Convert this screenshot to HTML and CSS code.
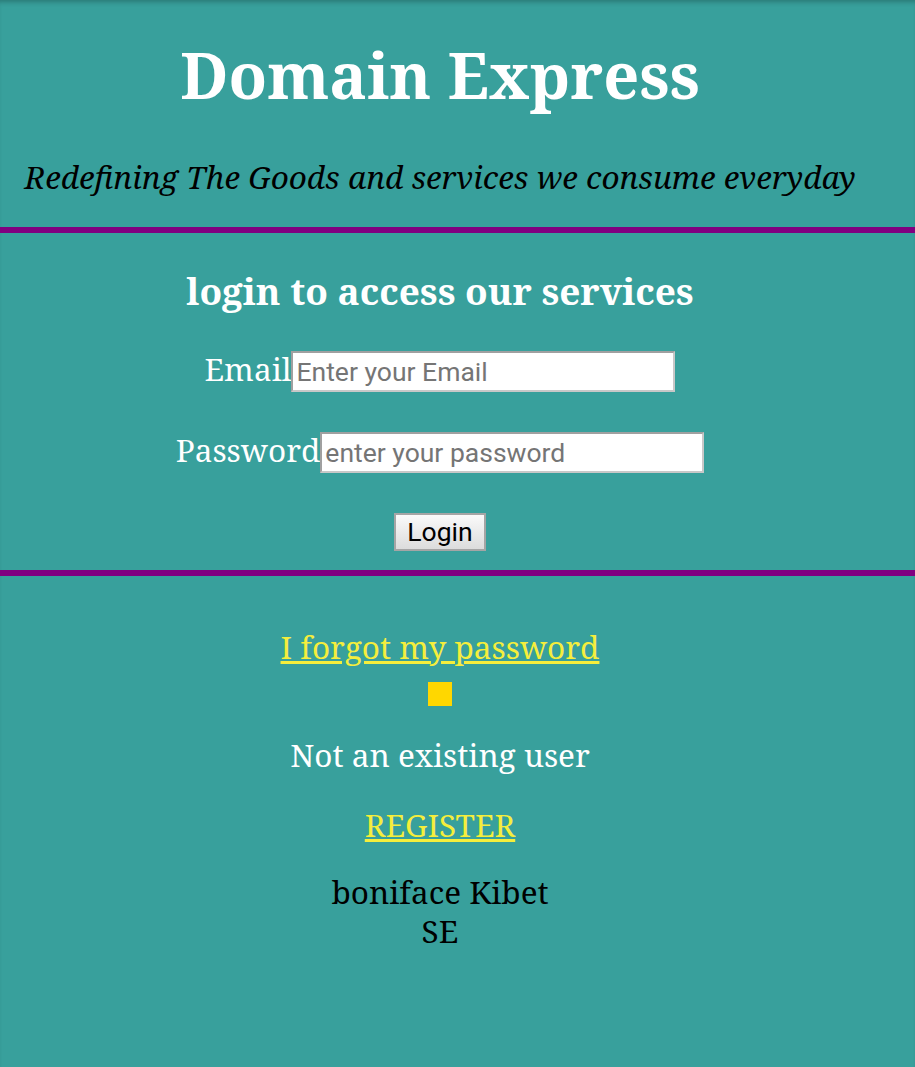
FILE: index.html
```html
<!DOCTYPE html>
<html>
<head>
<meta charset="utf-8">
<title>Domain Express</title>
<link rel="stylesheet" href="styles.css">
</head>
<body>
  <header class="header">
    <div class="inner">
      <h1 class="title">Domain Express</h1>
      <p class="tagline">Redefining The Goods and services we consume everyday</p>
    </div>
  </header>
  <section class="login">
    <div class="inner">
      <h2 class="login-title">login to access our services</h2>
      <form class="form">
        <div class="row"><label class="label">Email</label><input class="field" type="text" placeholder="Enter your Email"></div>
        <div class="row"><label class="label">Password</label><input class="field" type="password" placeholder="enter your password"></div>
        <div class="row"><button class="btn" type="button">Login</button></div>
      </form>
    </div>
  </section>
  <footer class="footer">
    <div class="inner footer-col">
      <a class="link" href="#">I forgot my password</a>
      <div class="square"></div>
      <p class="text">Not an existing user</p>
      <a class="link" href="#">REGISTER</a>
      <p class="author">boniface Kibet<br>SE</p>
    </div>
  </footer>
</body>
</html>
```
FILE: styles.css
```css
html, body {
  margin: 0;
  padding: 0;
  background: #38a09c;
}
body {
  min-height: 1067px;
  font-family: "Noto Serif", "DejaVu Serif", serif;
  box-shadow: inset 0 5px 5px -3px rgba(0,0,0,0.25);
}
.inner {
  width: 864px;
  margin-left: 8px;
  text-align: center;
}
.header {
  padding-top: 30px;
  padding-bottom: 30px;
  border-bottom: 6px solid #800080;
}
.title {
  margin: 0;
  font-size: 63px;
  line-height: 90px;
  color: #fff;
  font-weight: bold;
}
.tagline {
  margin: 37px 0 0;
  font-size: 31.5px;
  line-height: 40px;
  font-style: italic;
  color: #000;
}
.login {
  padding-top: 33px;
  padding-bottom: 19px;
  border-bottom: 6px solid #800080;
}
.login-title {
  margin: 0;
  font-size: 37px;
  line-height: 50px;
  color: #fff;
}
.form {
  margin-top: 35px;
  display: flex;
  flex-direction: column;
  align-items: center;
  gap: 40px;
}
.row {
  display: flex;
  align-items: flex-start;
}
.label {
  font-size: 31.5px;
  line-height: 36px;
  color: #fff;
}
.field {
  width: 384px;
  height: 41px;
  box-sizing: border-box;
  border: 2px solid #c8c8c8;
  border-top-color: #a0a0a0;
  border-left-color: #a0a0a0;
  background: #fff;
  font-family: Roboto, "Liberation Sans", sans-serif;
  font-size: 26.5px;
  padding: 0 3px;
  margin: 0;
}
.field::placeholder {
  color: #757575;
}
.btn {
  width: 92px;
  height: 38px;
  box-sizing: border-box;
  border: 2px solid #a5a5a5;
  background: linear-gradient(#fafafa, #dcdcdc);
  font-family: Roboto, "Liberation Sans", sans-serif;
  font-size: 26.5px;
  line-height: 30px;
  color: #000;
  padding: 0;
}
.footer {
  padding-top: 51px;
}
.footer-col {
  display: flex;
  flex-direction: column;
  align-items: center;
}
.link {
  font-size: 31.5px;
  line-height: 40px;
  color: #f5ee3c;
}
.square {
  width: 24px;
  height: 24px;
  background: #ffd700;
  margin-top: 15px;
}
.text {
  margin: 29px 0 0;
  font-size: 31.5px;
  line-height: 40px;
  color: #fff;
}
.text + .link {
  margin-top: 30px;
}
.author {
  margin: 27px 0 0;
  font-size: 31.5px;
  line-height: 39px;
  color: #000;
}
```
